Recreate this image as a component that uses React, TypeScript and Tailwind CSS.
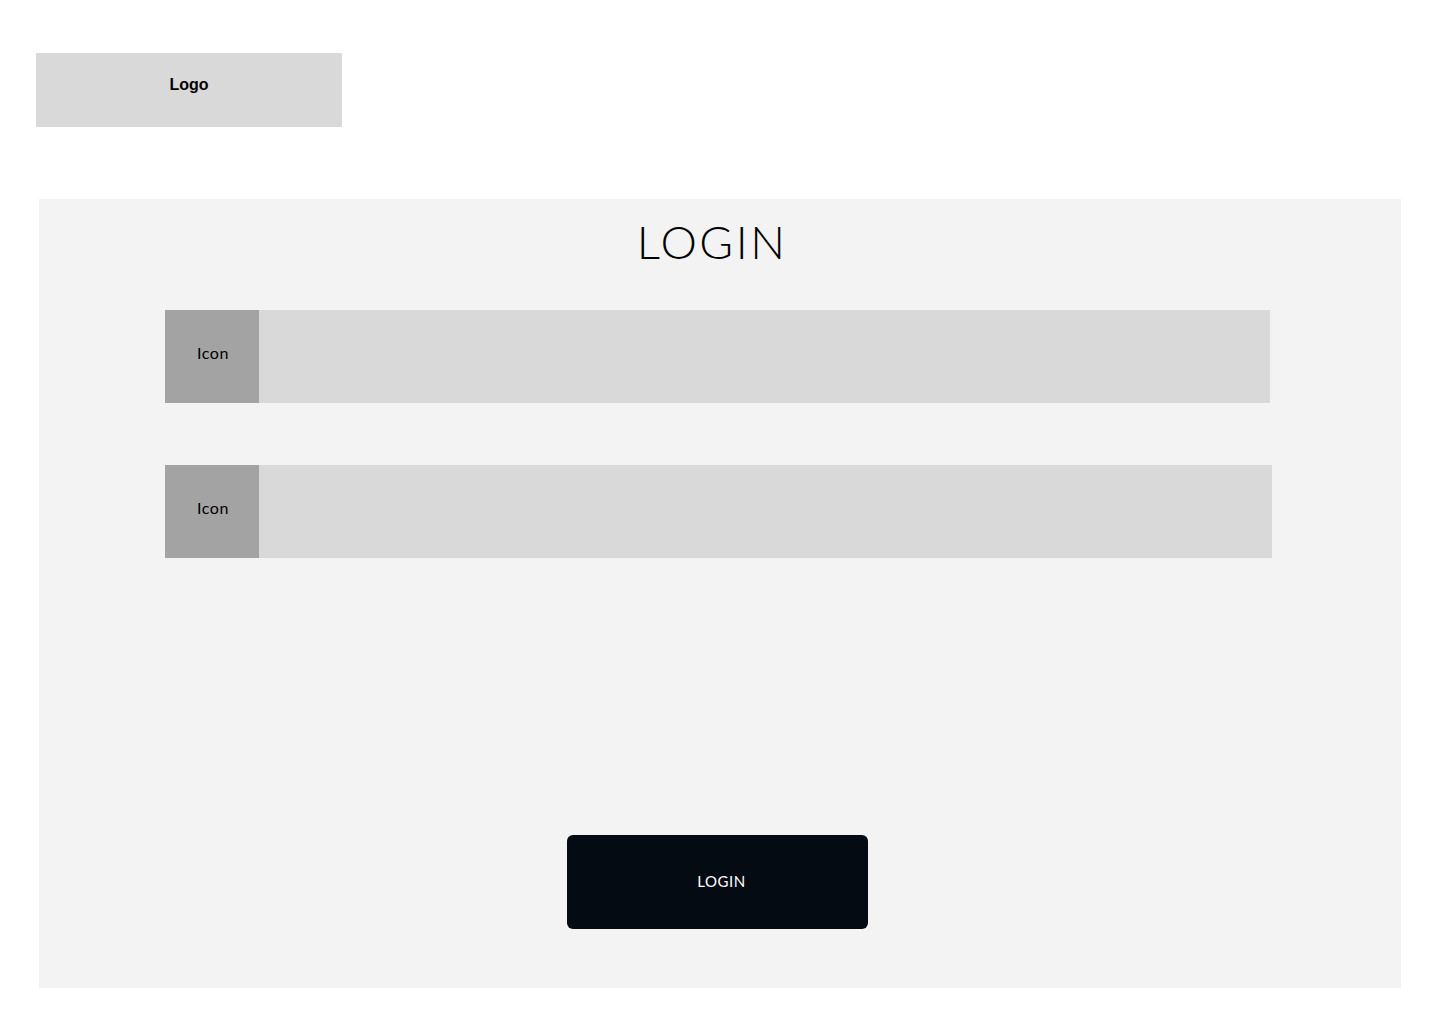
export default function App() {
  const fields = [{ w: "w-[1105px]" }, { w: "w-[1107px]" }];
  return (
    <div className="min-h-[1024px] w-[1440px] bg-white font-['Lato',sans-serif] text-black">
      {/* header */}
      <div className="pl-[36px] pt-[53px]">
        <div className="flex h-[74px] w-[306px] justify-center bg-[#d9d9d9] pt-[22px]">
          <span className="font-['Liberation_Sans',Arial,sans-serif] text-[16px] leading-[20px] font-bold">Logo</span>
        </div>
      </div>

      {/* login panel */}
      <div className="ml-[39px] mt-[72px] flex h-[789px] w-[1362px] flex-col bg-[#f3f3f3]">
        <h1 className="mt-[19px] h-[48px] pr-[16px] text-center text-[46px] leading-[48px] font-light tracking-[2.5px]">
          LOGIN
        </h1>

        <div className="mt-[44px] ml-[126px] flex flex-col gap-[62px]">
          {fields.map((f, i) => (
            <div key={i} className={`flex h-[93px] ${f.w} bg-[#d9d9d9]`}>
              <div className="flex w-[94px] items-center justify-center bg-[#a3a3a3] pb-[8px] pl-[2px] text-[16px] tracking-[0.6px]">
                Icon
              </div>
            </div>
          ))}
        </div>

        <button className="mt-[277px] ml-[528px] flex h-[94px] w-[301px] items-center justify-center rounded-[6px] bg-[#050b12] pb-[2px] pl-[8px] text-[15px] tracking-[0.5px] text-white">
          LOGIN
        </button>
      </div>
    </div>
  );
}
